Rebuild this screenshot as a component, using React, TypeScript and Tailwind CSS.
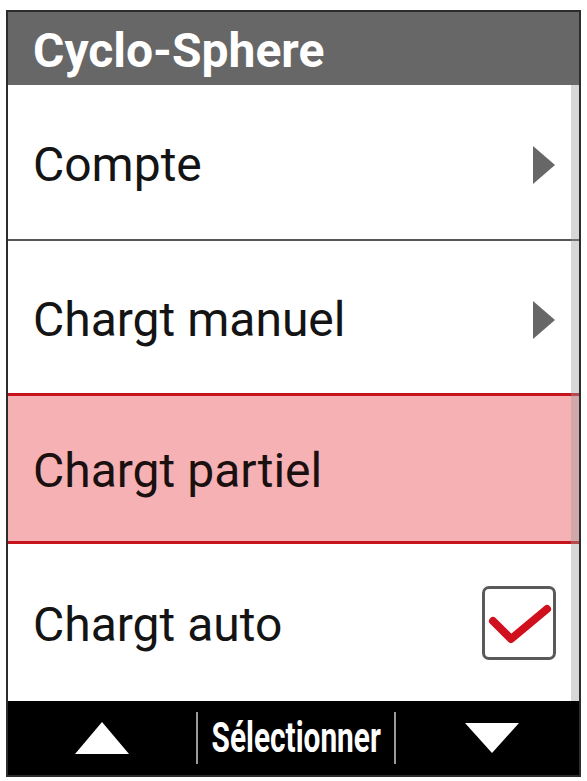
import React from "react";

const font = { fontFamily: "Roboto, 'Noto Sans', 'Liberation Sans', sans-serif" };

function RightArrow() {
  return (
    <svg width="24" height="40" viewBox="0 0 24 40" className="shrink-0">
      <polygon points="1,1 23,20 1,39" fill="#676767" />
    </svg>
  );
}

function CheckBox() {
  return (
    <div className="w-[74px] h-[74px] rounded-[7px] border-[3px] border-[#5a5a5a] bg-white flex items-center justify-center shrink-0">
      <svg width="68" height="68" viewBox="0 0 68 68">
        <polyline
          points="8,32 26,50 62,20"
          fill="none"
          stroke="#d0101c"
          strokeWidth="8"
          strokeLinecap="round"
          strokeLinejoin="round"
        />
      </svg>
    </div>
  );
}

export default function App() {
  return (
    <div className="w-[587px] h-[781px] bg-white pt-[10px] pl-[6px]" style={font}>
      <div className="w-[575px] h-[767px] border-2 border-[#2c2c2c] flex flex-col overflow-hidden">
        {/* Header */}
        <div className="h-[73px] bg-[#676767] flex items-center pl-[25px] pt-[4px] shrink-0">
          <span className="text-white font-bold text-[48px] leading-none tracking-[0px]">Cyclo-Sphere</span>
        </div>

        {/* List */}
        <div className="relative flex flex-col shrink-0">
          <div className="h-[156px] border-b-2 border-[#555] bg-white flex items-center justify-between pl-[25px] pr-[23px] pt-[6px]">
            <span className="text-[48px] leading-none text-[#141414]">Compte</span>
            <RightArrow />
          </div>
          <div className="h-[152px] bg-white flex items-center justify-between pl-[25px] pr-[23px] pt-[6px]">
            <span className="text-[48px] leading-none text-[#141414]">Chargt manuel</span>
            <RightArrow />
          </div>
          <div className="h-[151px] bg-[#f6b1b4] border-y-[3px] border-[#c5141c] flex items-center pl-[25px] pr-[23px] pt-[4px]">
            <span className="text-[48px] leading-none text-[#1a1010]">Chargt partiel</span>
          </div>
          <div className="h-[157px] bg-white flex items-center justify-between pl-[25px] pr-[23px]">
            <span className="text-[48px] leading-none text-[#141414] pt-[4px]">Chargt auto</span>
            <CheckBox />
          </div>
          {/* scrollbar overlay */}
          <div className="absolute right-0 top-0 bottom-0 w-[8px] bg-[#9a9a9a]/40" />
        </div>

        {/* Footer */}
        <div className="flex-1 bg-black flex items-center">
          <div className="w-[188px] flex items-center justify-center">
            <svg width="54" height="32" viewBox="0 0 54 32">
              <polygon points="27,0 54,32 0,32" fill="#ffffff" />
            </svg>
          </div>
          <div className="w-[2px] h-[52px] bg-[#9a9a9a]" />
          <div className="w-[196px] flex items-center justify-center overflow-visible">
            <span className="inline-block text-white font-bold text-[42px] leading-none scale-x-[0.71] whitespace-nowrap">
              Sélectionner
            </span>
          </div>
          <div className="w-[2px] h-[52px] bg-[#9a9a9a]" />
          <div className="flex-1 flex items-center justify-center pl-[8px]">
            <svg width="54" height="30" viewBox="0 0 54 30">
              <polygon points="0,0 54,0 27,30" fill="#ffffff" />
            </svg>
          </div>
        </div>
      </div>
    </div>
  );
}
